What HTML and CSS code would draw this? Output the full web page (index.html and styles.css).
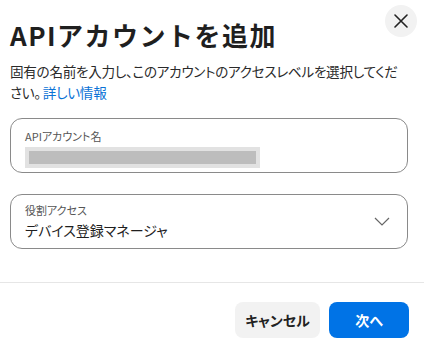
FILE: index.html
```html
<!DOCTYPE html>
<html lang="ja">
<head>
<meta charset="utf-8">
<link rel="stylesheet" href="styles.css">
</head>
<body>
<div class="dialog">
  <div class="head">
    <h1 class="title">APIアカウントを追加</h1>
    <button class="close" aria-label="閉じる">
      <svg width="14" height="14" viewBox="0 0 14 14"><path d="M1 1 L13 13 M13 1 L1 13" stroke="#222" stroke-width="1.6" stroke-linecap="round" fill="none"/></svg>
    </button>
  </div>
  <p class="desc">固有の名前を入力し、このアカウントのアクセスレベルを選択してください。<a class="link" href="#">詳しい情報</a></p>
  <div class="field">
    <div class="label">APIアカウント名</div>
    <div class="redact"><div class="redact-inner"></div></div>
  </div>
  <div class="field select">
    <div class="select-text">
      <div class="label">役割アクセス</div>
      <div class="value">デバイス登録マネージャ</div>
    </div>
    <svg class="chev" width="16" height="9" viewBox="0 0 16 9"><path d="M1 1 L8 8 L15 1" stroke="#666" stroke-width="1.2" fill="none"/></svg>
  </div>
  <div class="footer">
    <button class="btn cancel">キャンセル</button>
    <button class="btn next">次へ</button>
  </div>
</div>
</body>
</html>
```
FILE: styles.css
```css
* { box-sizing: border-box; }
body {
  margin: 0;
  background: #fff;
  font-family: "Noto Sans CJK JP", "Noto Sans", sans-serif;
  color: #222;
  font-feature-settings: "palt";
}
.dialog {
  width: 424px;
  height: 347px;
  overflow: hidden;
}
.head {
  display: flex;
  justify-content: space-between;
  align-items: flex-start;
  padding: 5px 7px 0 10px;
}
.title {
  margin: 12px 0 0 0;
  font-size: 26px;
  font-weight: 700;
  line-height: 36px;
  color: #1f1f1f;
  letter-spacing: 1.5px;
  font-feature-settings: normal;
}
.close {
  width: 32px;
  height: 32px;
  border-radius: 50%;
  border: none;
  background: #f2f2f2;
  display: flex;
  align-items: center;
  justify-content: center;
  padding: 0;
}
.desc {
  margin: 8px 16px 0 10px;
  font-size: 13.6px;
  line-height: 21px;
  letter-spacing: -0.3px;
  color: #2a2a2a;
}
.link {
  color: #0a72d6;
  text-decoration: none;
  margin-left: 2px;
}
.field {
  margin: 15px 16px 0 10px;
  height: 55px;
  border: 1px solid #8a8a8a;
  border-radius: 12px;
  padding: 10px 14px 0 14px;
}
.label {
  font-size: 11px;
  line-height: 14px;
  color: #555;
}
.redact {
  margin-top: 4px;
  width: 235px;
  height: 21px;
  background: #e2e2e2;
  padding: 4px;
}
.redact-inner {
  height: 13px;
  background: #bdbdbd;
}
.select {
  margin-top: 21px;
  display: flex;
  align-items: center;
  justify-content: space-between;
  padding-top: 0;
  padding-right: 17px;
}
.value {
  font-size: 14px;
  line-height: 20px;
  color: #1f1f1f;
  margin-top: 3px;
}
.footer {
  margin-top: 33px;
  border-top: 1px solid #e6e6e6;
  display: flex;
  justify-content: flex-end;
  gap: 9px;
  padding: 19px 15px 0 10px;
}
.btn {
  height: 36px;
  border: none;
  border-radius: 8px;
  font-family: inherit;
  font-size: 14px;
  font-weight: 700;
  padding: 0;
  font-feature-settings: "palt";
}
.cancel {
  width: 85px;
  background: #f2f2f2;
  color: #222;
}
.next {
  width: 80px;
  background: #0073e6;
  color: #fff;
}
```
